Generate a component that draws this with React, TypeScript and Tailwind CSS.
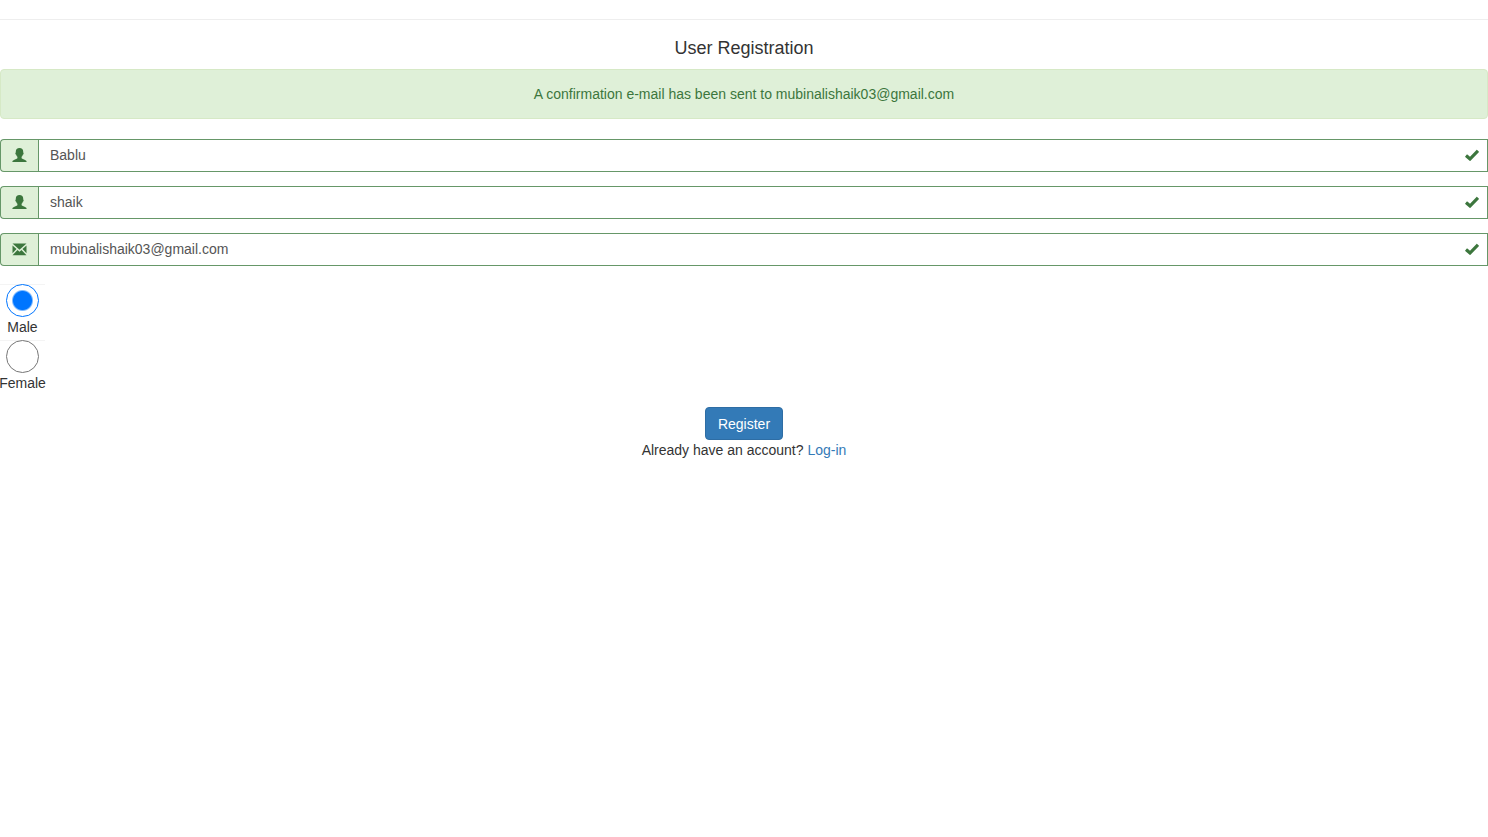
import { useState } from "react";

function UserIcon() {
  return (
    <svg viewBox="0 0 15 15" className="size-[15px]" fill="currentColor" aria-hidden="true">
      <path d="M7.500 0C5.100 0 3.800 1.400 3.800 3.500v1c-.5.200-.5.800-.3 1.400.1.500.4.800.7.900.2.900.6 1.500 1.200 2v1.100c0 .5-.3.700-.8.900L1.900 11.900C.8 12.400.4 12.900.3 14h14.400c-.1-1.100-.5-1.600-1.600-2.100l-2.700-1.100c-.5-.2-.8-.4-.8-.9V8.800c.6-.5 1-1.100 1.200-2 .3-.1.6-.4.7-.9.2-.6.200-1.200-.3-1.400v-1C11.200 1.400 9.900 0 7.500 0z" />
    </svg>
  );
}

function EnvelopeIcon() {
  return (
    <svg viewBox="0 0 15 15" className="size-[15px]" fill="currentColor" aria-hidden="true">
      <path d="M.5 1.500h14L7.500 7.700zM.5 3.500 4.500 7.100.5 11.200zM14.500 3.500l-4 3.600 4 4.100zM5.500 8 7.500 9.800 9.500 8l5 5.300H.5z" />
    </svg>
  );
}

function CheckIcon() {
  return (
    <svg viewBox="0 0 14 14" className="size-[14px]" fill="currentColor" aria-hidden="true">
      <path d="M11.500.9c.2-.2.400-.2.600 0l1.700 1.700c.2.200.2.400 0 .6L5.500 11.800c-.3.300-.6.300-.9 0L.2 8c-.2-.2-.2-.4 0-.6l1.600-1.800c.2-.2.400-.2.600 0L5 7.700z" />
    </svg>
  );
}

const fields = [
  { name: "firstName", label: "First name", type: "text", value: "Bablu", Icon: UserIcon },
  { name: "lastName", label: "Last name", type: "text", value: "shaik", Icon: UserIcon },
  { name: "email", label: "E-mail", type: "email", value: "mubinalishaik03@gmail.com", Icon: EnvelopeIcon },
];

export default function App() {
  const [gender, setGender] = useState("Male");

  return (
    <main className="bg-white pt-[19px] font-['Liberation_Sans',Arial,sans-serif] text-sm leading-5 text-[#333]">
      <hr className="border-t border-[#eee]" />
      <h1 className="mt-[18px] text-center text-lg leading-5">User Registration</h1>
      <div
        role="status"
        className="mt-[11px] rounded border border-[#d6e9c6] bg-[#dff0d8] py-[14px] text-center text-[#3c763d]"
      >
        A confirmation e-mail has been sent to mubinalishaik03@gmail.com
      </div>
      <form className="mt-5" onSubmit={(event) => event.preventDefault()}>
        <div className="flex flex-col gap-[14px]">
          {fields.map(({ name, label, type, value, Icon }) => (
            <div key={name} className="relative flex h-[33px] text-[#3c763d]">
              <label
                htmlFor={name}
                aria-label={label}
                className="flex w-[38px] shrink-0 items-center justify-center rounded-l border border-r-0 border-[#669768] bg-[#dff0d8]"
              >
                <Icon />
              </label>
              <input
                id={name}
                name={name}
                type={type}
                defaultValue={value}
                className="min-w-0 flex-1 border border-[#669768] bg-white pr-10 pb-[2px] pl-[11px] text-[#555] outline-none"
              />
              <span className="pointer-events-none absolute inset-y-0 right-[9px] flex items-center">
                <CheckIcon />
              </span>
            </div>
          ))}
        </div>
        <div role="radiogroup" aria-label="Gender" className="mt-[18px] flex w-[45px] flex-col gap-[3px]">
          {["Male", "Female"].map((option) => (
            <label key={option} className="flex flex-col items-center border-t border-[#f4f4f4]">
              <input
                type="radio"
                name="gender"
                value={option}
                checked={gender === option}
                onChange={() => setGender(option)}
                className="-mt-px size-[33px] appearance-none rounded-full border border-[#767676] bg-white checked:border-[#0075ff] checked:bg-[radial-gradient(circle,#0075ff_9px,#fff_11px)]"
              />
              <span className="leading-5">{option}</span>
            </label>
          ))}
        </div>
        <div className="mt-[14px] flex flex-col items-center">
          <button
            type="submit"
            className="h-[33px] rounded border border-[#2e6da4] bg-[#337ab7] px-3 text-white"
          >
            Register
          </button>
          <p>
            Already have an account?{" "}
            <a href="#login" className="text-[#337ab7]">
              Log-in
            </a>
          </p>
        </div>
      </form>
    </main>
  );
}
